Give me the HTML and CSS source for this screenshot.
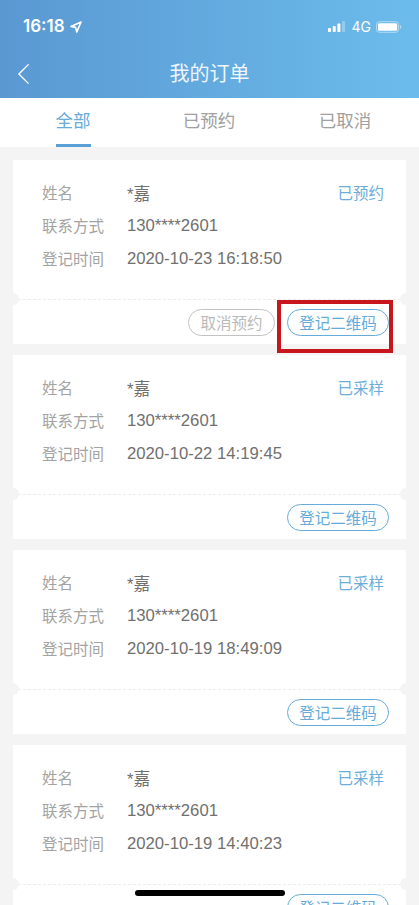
FILE: index.html
```html
<!DOCTYPE html>
<html lang="zh-CN">
<head>
<meta charset="utf-8">
<title>我的订单</title>
<link rel="stylesheet" href="styles.css">
</head>
<body>
<div class="page">
  <header class="header">
    <div class="status">
      <div class="status-left">
        <span class="clock">16:18</span>
        <svg class="loc" viewBox="0 0 12 12"><path d="M11 1 1 5.400l4.600 1L6.800 11z" fill="none" stroke="#fff" stroke-width="1.600" stroke-linejoin="round"/></svg>
      </div>
      <div class="status-right">
        <svg class="signal" viewBox="0 0 18 11"><rect x="0" y="7" width="3" height="4" rx=".7" fill="#fff"/><rect x="4.700" y="5" width="3" height="6" rx=".7" fill="#fff"/><rect x="9.400" y="2.500" width="3" height="8.500" rx=".7" fill="#fff"/><rect x="14.100" y="0" width="3" height="11" rx=".7" fill="#fff" opacity=".3"/></svg>
        <span class="net">4G</span>
        <svg class="battery" viewBox="0 0 27 12"><rect x=".5" y=".5" width="23" height="11" rx="3" fill="none" stroke="#fff" stroke-opacity=".5"/><rect x="2" y="2" width="20" height="8" rx="1.600" fill="#fff"/><path d="M25 4v4c.8-.3 1.300-1.100 1.300-2S25.800 4.300 25 4z" fill="#fff" opacity=".5"/></svg>
      </div>
    </div>
    <div class="nav">
      <svg class="back" viewBox="0 0 14 24"><path d="M12.500 1.500 2 12l10.500 10.500" fill="none" stroke="#fff" stroke-width="1.500"/></svg>
      <h1 class="title">我的订单</h1>
    </div>
  </header>

  <nav class="tabs">
    <a class="tab tab-active">全部</a>
    <a class="tab">已预约</a>
    <a class="tab">已取消</a>
  </nav>

  <main class="list">
    <article class="card">
      <div class="info">
        <div class="row"><span class="label">姓名</span><span class="value">*嘉</span><span class="state">已预约</span></div>
        <div class="row"><span class="label">联系方式</span><span class="value">130****2601</span></div>
        <div class="row"><span class="label">登记时间</span><span class="value">2020-10-23 16:18:50</span></div>
      </div>
      <div class="actions">
        <button class="btn btn-muted">取消预约</button>
        <button class="btn btn-primary">登记二维码</button>
        <span class="highlight"></span>
      </div>
    </article>
    <article class="card">
      <div class="info">
        <div class="row"><span class="label">姓名</span><span class="value">*嘉</span><span class="state">已采样</span></div>
        <div class="row"><span class="label">联系方式</span><span class="value">130****2601</span></div>
        <div class="row"><span class="label">登记时间</span><span class="value">2020-10-22 14:19:45</span></div>
      </div>
      <div class="actions"><button class="btn btn-primary">登记二维码</button></div>
    </article>
    <article class="card">
      <div class="info">
        <div class="row"><span class="label">姓名</span><span class="value">*嘉</span><span class="state">已采样</span></div>
        <div class="row"><span class="label">联系方式</span><span class="value">130****2601</span></div>
        <div class="row"><span class="label">登记时间</span><span class="value">2020-10-19 18:49:09</span></div>
      </div>
      <div class="actions"><button class="btn btn-primary">登记二维码</button></div>
    </article>
    <article class="card">
      <div class="info">
        <div class="row"><span class="label">姓名</span><span class="value">*嘉</span><span class="state">已采样</span></div>
        <div class="row"><span class="label">联系方式</span><span class="value">130****2601</span></div>
        <div class="row"><span class="label">登记时间</span><span class="value">2020-10-19 14:40:23</span></div>
      </div>
      <div class="actions"><button class="btn btn-primary">登记二维码</button></div>
    </article>
  </main>
  <div class="home-bar"></div>
</div>
</body>
</html>
```

FILE: styles.css
```css
* { box-sizing: border-box; }
html, body { margin: 0; padding: 0; }
body {
  font-family: "Liberation Sans", "Noto Sans CJK SC", sans-serif;
  background: #f4f4f4;
}
.page {
  position: relative;
  width: 419px;
  height: 905px;
  overflow: hidden;
  background: #f4f4f4;
}
.header {
  height: 98px;
  background: linear-gradient(90deg, #5a98d2 0%, #6bbcec 100%);
  color: #fff;
}
.status {
  height: 50px;
  padding: 17px 17px 0 23px;
  display: flex;
  justify-content: space-between;
  align-items: flex-start;
}
.status-left { display: flex; align-items: center; gap: 5px; height: 19px; }
.clock { font-size: 17px; font-weight: 600; line-height: 19px; font-family: "Inter", "Liberation Sans", sans-serif; }
.loc { width: 12px; height: 12px; }
.status-right { display: flex; align-items: center; height: 19px; }
.signal { width: 18px; height: 11px; margin-right: 6px; }
.net { font-size: 14px; line-height: 19px; margin-right: 5px; font-family: "Inter", "Liberation Sans", sans-serif; }
.battery { width: 26px; height: 12px; }
.nav {
  position: relative;
  height: 48px;
  padding-bottom: 2px;
  display: flex;
  align-items: center;
  justify-content: center;
}
.back { position: absolute; left: 17px; top: 13px; width: 13px; height: 22px; }
.title {
  margin: 0;
  font-size: 20px;
  font-weight: 400;
  line-height: 46px;
  font-family: "Noto Sans CJK SC", sans-serif;
  opacity: .9;
}
.tabs {
  height: 49px;
  background: #fff;
  padding: 0 5px;
  display: grid;
  grid-template-columns: repeat(3, 136px);
  justify-items: center;
}
.tab {
  height: 49px;
  line-height: 43px;
  font-size: 17.500px;
  color: #a0a0a0;
  font-family: "Noto Sans CJK SC", sans-serif;
}
.tab-active {
  color: #66abd9;
  border-bottom: 3px solid #5aa0d6;
}
.list {
  padding: 13px 13px 0;
  display: flex;
  flex-direction: column;
  gap: 11px;
}
.card {
  position: relative;
  flex: none;
  height: 184px;
  background: #fff;
}
.card::before, .card::after {
  content: "";
  position: absolute;
  top: 133px;
  width: 12px;
  height: 12px;
  border-radius: 50%;
  background: #f4f4f4;
}
.card::before { left: -6px; }
.card::after { right: -6px; }
.info {
  height: 140px;
  padding: 16px 22px 0 29px;
  border-bottom: 1px dashed #ececec;
}
.row {
  display: flex;
  align-items: center;
  height: 33px;
  font-size: 15.500px;
}
.label {
  width: 85px;
  margin-bottom: 2px;
  color: #a3a3a3;
  font-family: "Noto Sans CJK SC", sans-serif;
}
.value {
  color: #707070;
  flex: 1;
  font-size: 16.700px;
}
.state {
  margin-bottom: 2px;
  color: #6aaed9;
  font-family: "Noto Sans CJK SC", sans-serif;
}
.actions {
  position: relative;
  display: flex;
  justify-content: flex-end;
  gap: 12px;
  padding: 9px 17px 0 0;
}
.btn {
  height: 27px;
  padding: 0;
  border-radius: 14px;
  background: #fff;
  font-size: 15.500px;
  line-height: 25px;
  font-family: "Noto Sans CJK SC", sans-serif;
}
.btn-muted {
  width: 87px;
  border: 1px solid #c2c2c2;
  color: #bababa;
}
.btn-primary {
  width: 102px;
  border: 1px solid #66abd9;
  color: #66abd9;
}
.highlight {
  position: absolute;
  left: 264px;
  top: 0;
  width: 116px;
  height: 53px;
  border: 4px solid #c8171c;
  pointer-events: none;
}
.home-bar {
  position: absolute;
  left: 135px;
  top: 890px;
  width: 150px;
  height: 6px;
  border-radius: 3px;
  background: #000;
}
```
